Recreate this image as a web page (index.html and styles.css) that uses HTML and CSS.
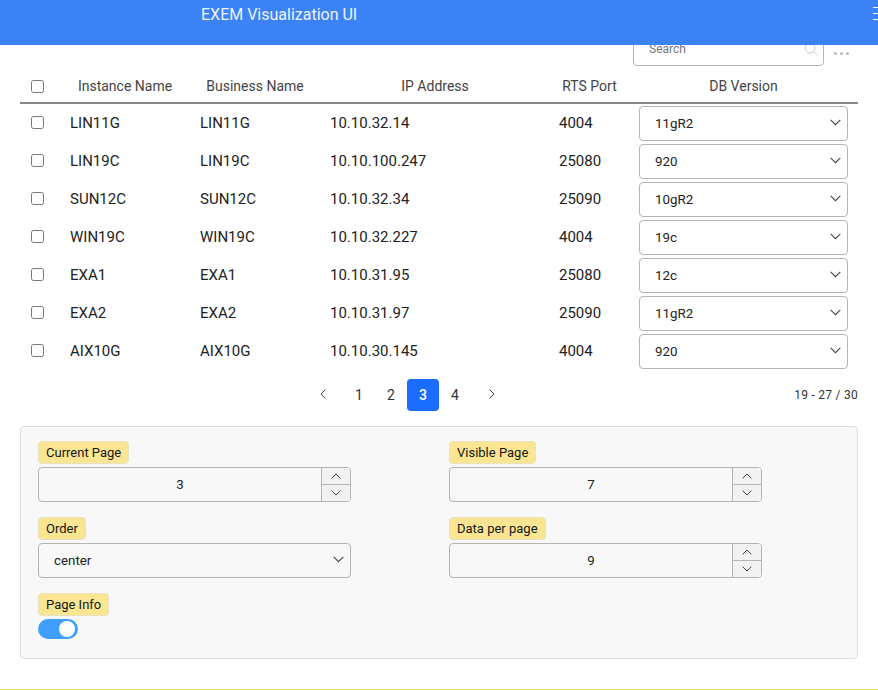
FILE: index.html
```html
<!DOCTYPE html>
<html lang="en">
<head>
<meta charset="utf-8">
<title>EXEM Visualization UI</title>
<link rel="stylesheet" href="styles.css">
</head>
<body>
<svg class="defs" width="0" height="0" aria-hidden="true">
  <symbol id="chev-down" viewBox="0 0 10 6"><path d="M.6.6L5 5 9.4.6" fill="none" stroke="currentColor" stroke-width="1"/></symbol>
  <symbol id="chev-up" viewBox="0 0 10 6"><path d="M.6 5.4L5 1l4.4 4.4" fill="none" stroke="currentColor" stroke-width="1"/></symbol>
</svg>
<header class="app-header">
  <h1 class="app-title">EXEM Visualization UI</h1>
  <div class="menu-icon"><span></span><span></span><span></span></div>
</header>
<main class="content">
  <div class="toolbar">
    <div class="search">
      <span class="search-text">Search</span>
      <svg class="search-icon" width="14" height="14" viewBox="0 0 14 14"><circle cx="6" cy="6" r="5" fill="none" stroke="currentColor"/><path d="M9.6 9.6L13.4 13.4" stroke="currentColor" fill="none"/></svg>
    </div>
    <div class="dots"><i></i><i></i><i></i></div>
  </div>
  <table class="grid">
    <colgroup><col class="c-check"><col class="c-name"><col class="c-name"><col class="c-ip"><col class="c-port"><col class="c-db"></colgroup>
    <thead>
      <tr><th class="check"><input type="checkbox"></th><th>Instance Name</th><th>Business Name</th><th>IP Address</th><th>RTS Port</th><th>DB Version</th></tr>
    </thead>
    <tbody>
      <tr><td class="check"><input type="checkbox"></td><td>LIN11G</td><td>LIN11G</td><td>10.10.32.14</td><td>4004</td><td class="db"><div class="select"><span>11gR2</span><svg class="chev"><use href="#chev-down"/></svg></div></td></tr>
      <tr><td class="check"><input type="checkbox"></td><td>LIN19C</td><td>LIN19C</td><td>10.10.100.247</td><td>25080</td><td class="db"><div class="select"><span>920</span><svg class="chev"><use href="#chev-down"/></svg></div></td></tr>
      <tr><td class="check"><input type="checkbox"></td><td>SUN12C</td><td>SUN12C</td><td>10.10.32.34</td><td>25090</td><td class="db"><div class="select"><span>10gR2</span><svg class="chev"><use href="#chev-down"/></svg></div></td></tr>
      <tr><td class="check"><input type="checkbox"></td><td>WIN19C</td><td>WIN19C</td><td>10.10.32.227</td><td>4004</td><td class="db"><div class="select"><span>19c</span><svg class="chev"><use href="#chev-down"/></svg></div></td></tr>
      <tr><td class="check"><input type="checkbox"></td><td>EXA1</td><td>EXA1</td><td>10.10.31.95</td><td>25080</td><td class="db"><div class="select"><span>12c</span><svg class="chev"><use href="#chev-down"/></svg></div></td></tr>
      <tr><td class="check"><input type="checkbox"></td><td>EXA2</td><td>EXA2</td><td>10.10.31.97</td><td>25090</td><td class="db"><div class="select"><span>11gR2</span><svg class="chev"><use href="#chev-down"/></svg></div></td></tr>
      <tr><td class="check"><input type="checkbox"></td><td>AIX10G</td><td>AIX10G</td><td>10.10.30.145</td><td>4004</td><td class="db"><div class="select"><span>920</span><svg class="chev"><use href="#chev-down"/></svg></div></td></tr>
    </tbody>
  </table>
  <nav class="pager">
    <div class="pages">
      <span class="page nav"><svg width="6" height="10" viewBox="0 0 6 10"><path d="M5.4.6L1 5l4.4 4.4" fill="none" stroke="currentColor" stroke-width="1"/></svg></span>
      <span class="page">1</span><span class="page">2</span><span class="page active">3</span><span class="page">4</span>
      <span class="page nav"><svg width="6" height="10" viewBox="0 0 6 10"><path d="M.6.6L5 5 .6 9.4" fill="none" stroke="currentColor" stroke-width="1"/></svg></span>
    </div>
    <div class="page-info">19 - 27 / 30</div>
  </nav>
  <section class="panel">
    <div class="field">
      <label class="tag">Current Page</label>
      <div class="spin"><div class="spin-value">3</div><div class="spin-btns"><span><svg class="chev-s"><use href="#chev-up"/></svg></span><span><svg class="chev-s"><use href="#chev-down"/></svg></span></div></div>
    </div>
    <div class="field">
      <label class="tag">Visible Page</label>
      <div class="spin"><div class="spin-value">7</div><div class="spin-btns"><span><svg class="chev-s"><use href="#chev-up"/></svg></span><span><svg class="chev-s"><use href="#chev-down"/></svg></span></div></div>
    </div>
    <div class="field">
      <label class="tag">Order</label>
      <div class="select select-wide"><span>center</span><svg class="chev"><use href="#chev-down"/></svg></div>
    </div>
    <div class="field">
      <label class="tag">Data per page</label>
      <div class="spin"><div class="spin-value">9</div><div class="spin-btns"><span><svg class="chev-s"><use href="#chev-up"/></svg></span><span><svg class="chev-s"><use href="#chev-down"/></svg></span></div></div>
    </div>
    <div class="field">
      <label class="tag">Page Info</label>
      <div class="toggle"><i></i></div>
    </div>
  </section>
  <div class="rule"></div>
</main>
</body>
</html>
```
FILE: styles.css
```css
* { box-sizing: border-box; }
html, body { margin: 0; height: 690px; overflow: hidden; background: #fff; }
body { font-family: Roboto, "Liberation Sans", sans-serif; color: #1f1f1f; font-size: 14px; }
.defs { position: absolute; }

.app-header { position: relative; z-index: 2; height: 45px; margin-bottom: -14px; background: #3b82f6; display: flex; justify-content: space-between; overflow: hidden; }
.app-title { margin: 5px 0 0 201px; font-size: 16px; font-weight: 400; line-height: 19px; color: #eef3fb; }
.menu-icon { width: 5px; margin-top: 7px; display: flex; flex-direction: column; gap: 5px; }
.menu-icon span { display: block; width: 5px; height: 1px; background: #fff; }

.content { padding: 0 20px; }
.toolbar { height: 35px; display: flex; justify-content: flex-end; align-items: flex-end; padding-right: 9px; margin-bottom: 4px; }
.search { width: 191px; height: 35px; border: 1px solid #b4b4b4; border-radius: 4px; display: flex; align-items: center; justify-content: space-between; padding: 0 5px 0 15px; }
.search-text { font-size: 12px; color: #777; }
.search-icon { color: #c9c9c9; }
.dots { width: 15px; margin-left: 10px; margin-bottom: 11px; display: flex; gap: 3px; }
.dots i { width: 3px; height: 3px; border-radius: 50%; background: #b5b8bf; }

.grid { width: 838px; border-collapse: separate; border-spacing: 0; table-layout: fixed; }
.c-check { width: 40px; } .c-name { width: 130px; } .c-ip { width: 230px; } .c-port { width: 79px; } .c-db { width: 229px; }
.grid th { height: 34px; padding: 0 0 1px; font-size: 14px; font-weight: 400; color: #444; text-align: center; border-bottom: 2px solid #888; }
.grid td { height: 38px; padding: 0 10px; font-size: 15px; color: #222; }
.grid td:nth-child(5) { padding-left: 9px; }
.grid .check { padding: 0 0 0 11px; text-align: left; }
.grid td.check { padding-bottom: 2px; }
.check input { display: block; margin: 0; width: 13px; height: 13px; }
.grid td.db { padding: 2px 10px 1px; }

.select { height: 35px; border: 1px solid #b4b4b4; border-radius: 4px; background: #fff; display: flex; align-items: center; justify-content: space-between; padding: 0 6px 0 15px; font-size: 13.33px; color: #222; }
.chev { width: 11px; height: 7px; color: #444; margin-top: -3px; }

.pager { height: 36px; margin-top: 7px; position: relative; display: flex; justify-content: flex-end; align-items: center; }
.pages { position: absolute; left: 287px; top: 2px; display: flex; }
.page { width: 32px; height: 32px; display: flex; align-items: center; justify-content: center; border-radius: 4px; font-size: 14px; color: #333; }
.page.nav { color: #444; padding-bottom: 3px; }
.page.nav:first-child { margin-right: 4px; }
.page.nav:last-child { margin-left: 5px; }
.page.active { background: #1a6dff; color: #fff; font-weight: 500; }
.page-info { font-size: 12px; color: #333; letter-spacing: .25px; }

.panel { width: 838px; height: 233px; margin-top: 13px; background: #f8f8f8; border: 1px solid #ddd; border-radius: 4px; padding: 14px 17px 0; display: grid; grid-template-columns: 411px 411px; grid-auto-rows: 76px; }
.field { width: 313px; display: flex; flex-direction: column; align-items: flex-start; gap: 3px; }
.tag { height: 23px; padding: 0 7px; display: flex; align-items: center; background: #fae692; border: 1px solid #e8e2c0; border-radius: 4px; font-size: 13px; color: #161616; }
.spin { width: 100%; height: 35px; border: 1px solid #b4b4b4; border-radius: 4px; display: flex; overflow: hidden; }
.spin-value { flex: 1; display: flex; align-items: center; justify-content: center; font-size: 13.33px; color: #222; }
.spin-btns { width: 29px; border-left: 1px solid #b4b4b4; background: #f2f2f2; display: flex; flex-direction: column; }
.spin-btns span { flex: 1; display: flex; align-items: center; justify-content: center; }
.spin-btns span:first-child { border-bottom: 1px solid #b4b4b4; }
.chev-s { width: 10px; height: 6px; color: #444; }
.select-wide { width: 100%; background: transparent; }
.toggle { width: 40px; height: 20px; border-radius: 10px; background: #409eff; padding: 2px; display: flex; justify-content: flex-end; }
.toggle i { width: 16px; height: 16px; border-radius: 50%; background: #fff; margin-right: 1px; }

.rule { height: 1px; margin: 30px -20px 0; background: #f8d85c; }
```
